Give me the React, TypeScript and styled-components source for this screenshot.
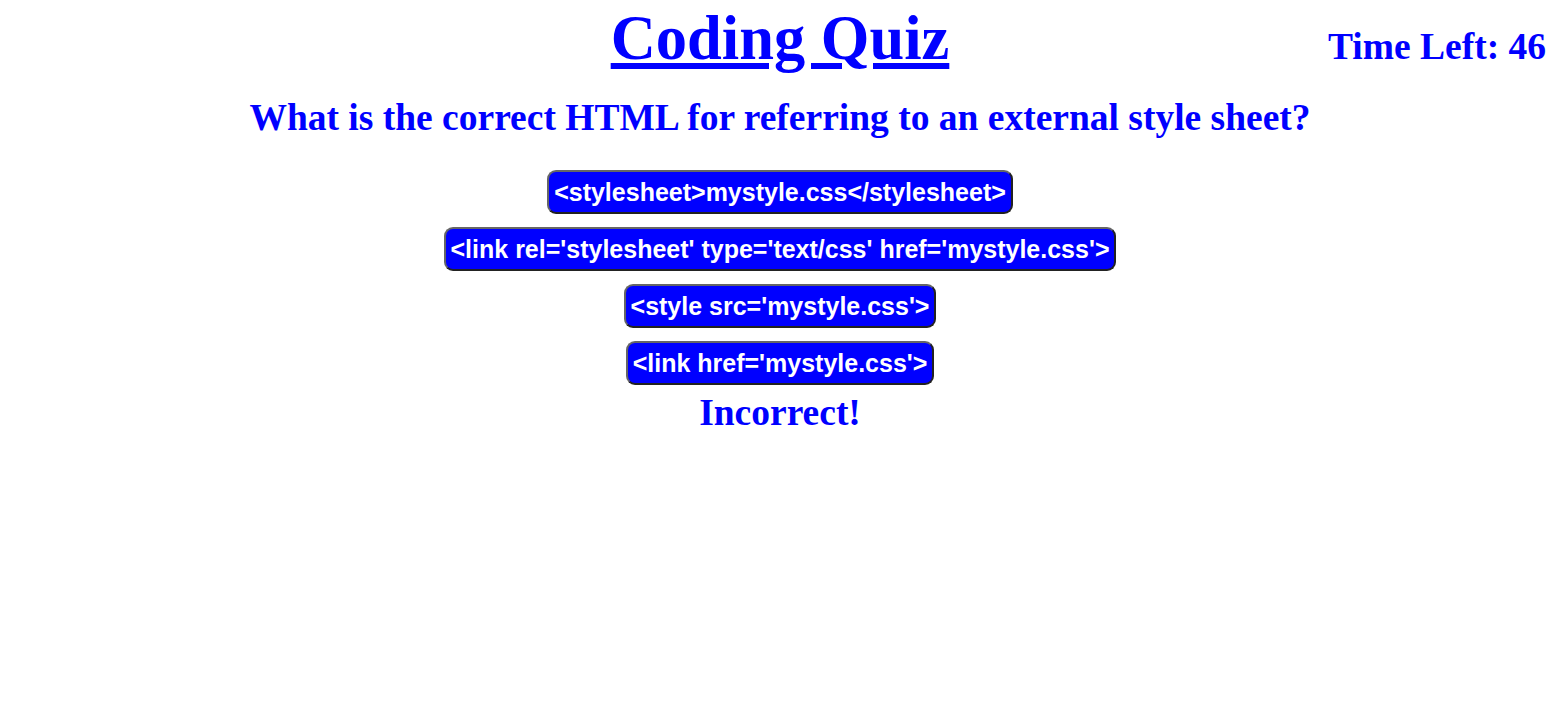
import React from "react";
import styled, { createGlobalStyle } from "styled-components";

const Global = createGlobalStyle`
  html, body { margin: 0; padding: 0; background: #fff; }
  body { font-family: "Liberation Serif", "Times New Roman", serif; color: #0000ff; }
`;

const Page = styled.main`
  width: 1560px;
  display: flex;
  flex-direction: column;
  align-items: center;
`;

const Header = styled.header`
  width: 100%;
  display: grid;
  grid-template-columns: 1fr auto 1fr;
  align-items: baseline;
`;

const Title = styled.h1`
  grid-column: 2;
  margin: 0;
  font-size: 62.5px;
  font-weight: bold;
  text-decoration: underline;
  line-height: 76px;
`;

const Timer = styled.div`
  grid-column: 3;
  justify-self: end;
  padding-right: 14px;
  font-size: 37.5px;
  font-weight: bold;
`;

const Question = styled.h2`
  margin: 20px 0 30px;
  font-size: 37.5px;
  font-weight: bold;
  line-height: 44px;
`;

const Choices = styled.div`
  display: flex;
  flex-direction: column;
  align-items: center;
  gap: 13px;
`;

const Choice = styled.button`
  font-family: "Liberation Sans", Arial, sans-serif;
  font-size: 25px;
  font-weight: bold;
  color: #fff;
  background: #0000ff;
  border: 2px solid #555;
  border-color: #666 #222 #222 #666;
  border-radius: 9px;
  padding: 6px 5px;
  line-height: 28px;
  cursor: pointer;
`;

const Result = styled.div`
  margin-top: 6px;
  font-size: 37.5px;
  font-weight: bold;
  line-height: 44px;
`;

const choices = [
  "<stylesheet>mystyle.css</stylesheet>",
  "<link rel='stylesheet' type='text/css' href='mystyle.css'>",
  "<style src='mystyle.css'>",
  "<link href='mystyle.css'>",
];

export default function App() {
  return (
    <>
      <Global />
      <Page>
        <Header>
          <Title>Coding Quiz</Title>
          <Timer>Time Left: 46</Timer>
        </Header>
        <Question>What is the correct HTML for referring to an external style sheet?</Question>
        <Choices>
          {choices.map((c) => (
            <Choice key={c}>{c}</Choice>
          ))}
        </Choices>
        <Result>Incorrect!</Result>
      </Page>
    </>
  );
}
